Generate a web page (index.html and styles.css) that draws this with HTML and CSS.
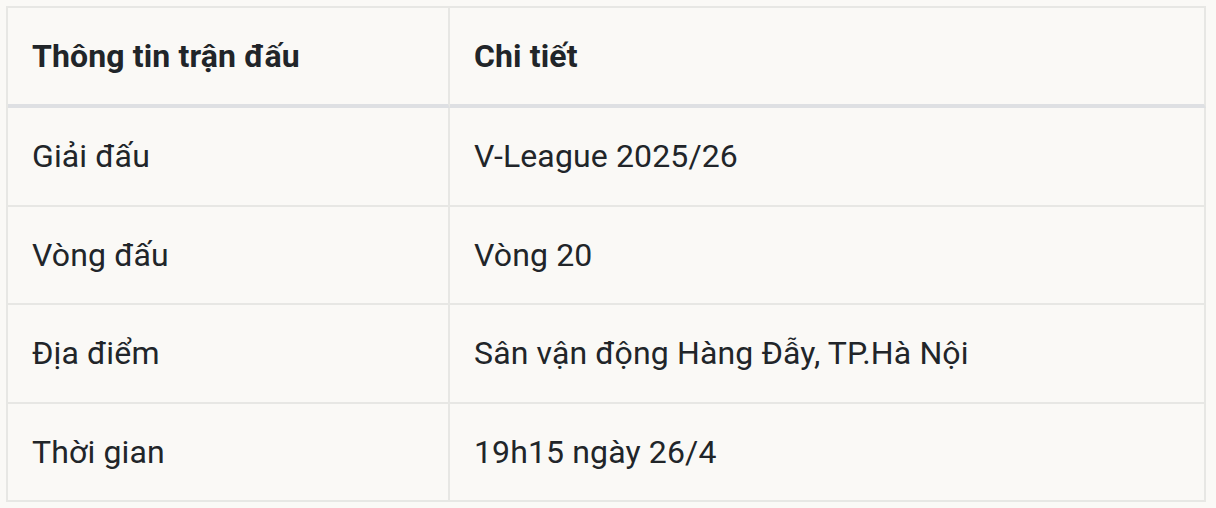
FILE: index.html
```html
<!DOCTYPE html>
<html lang="vi">
<head>
<meta charset="utf-8">
<link rel="stylesheet" href="styles.css">
</head>
<body>
<table class="match-table">
  <colgroup>
    <col class="col-label">
    <col class="col-value">
  </colgroup>
  <thead>
    <tr><th>Thông tin trận đấu</th><th>Chi tiết</th></tr>
  </thead>
  <tbody>
    <tr><td>Giải đấu</td><td>V-League 2025/26</td></tr>
    <tr><td>Vòng đấu</td><td>Vòng 20</td></tr>
    <tr><td>Địa điểm</td><td>Sân vận động Hàng Đẫy, TP.Hà Nội</td></tr>
    <tr><td>Thời gian</td><td>19h15 ngày 26/4</td></tr>
  </tbody>
</table>
</body>
</html>
```
FILE: styles.css
```css
html, body {
  margin: 0;
  background: #faf9f6;
}
body {
  padding: 6px;
  font-family: Roboto, "Noto Sans", sans-serif;
  color: #212529;
}
.match-table {
  width: 1200px;
  table-layout: fixed;
  border-collapse: separate;
  border-spacing: 0;
  border-top: 2px solid #e7e7e4;
  border-left: 2px solid #e7e7e4;
  background: #faf9f6;
}
.col-label { width: 442px; }
.col-value { width: 756px; }
.match-table th,
.match-table td {
  text-align: left;
  vertical-align: middle;
  padding: 24px 24px;
  font-size: 32px;
  letter-spacing: 0.13px;
  border-right: 2px solid #e7e7e4;
  border-bottom: 2px solid #e7e7e4;
}
.match-table th {
  font-weight: 700;
  line-height: 48px;
  border-bottom: 4px solid #dee0e3;
}
.match-table td {
  font-weight: 400;
  line-height: 48.5px;
}
```
